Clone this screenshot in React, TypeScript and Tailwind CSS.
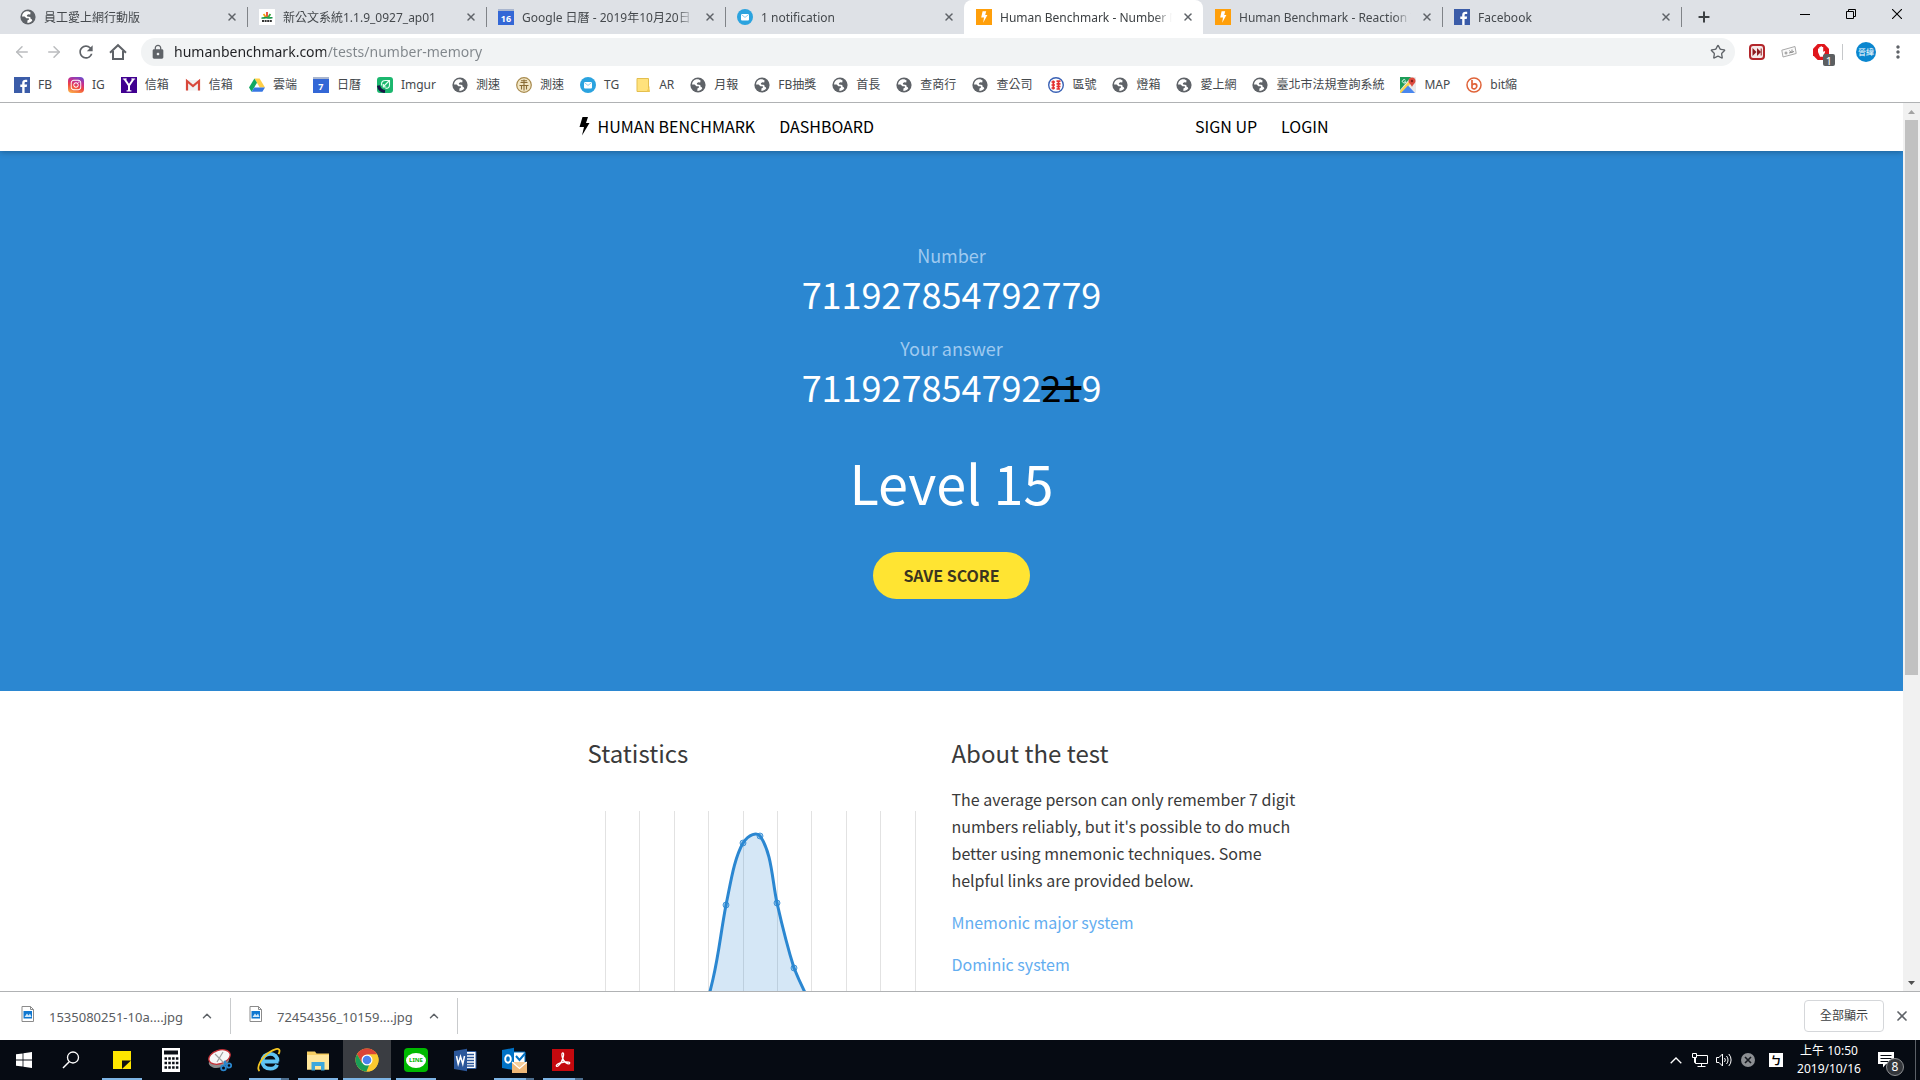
import React from "react";
import { ArrowLeft, ArrowRight, ChevronUp, Plus, Star, X } from "lucide-react";
import { FaInstagram } from "react-icons/fa";
import { MdLock, MdMoreVert, MdRefresh } from "react-icons/md";

const icon16 = "size-4 shrink-0";

function Globe() {
  return (
    <svg className={icon16} viewBox="0 0 16 16" aria-hidden="true">
      <circle cx="8" cy="8" r="7.6" fill="#5f6368" />
      <path d="M6.2 2.2 C3.6 3 2.1 5 2 7.4 L4.6 7.5 L6.4 9.3 L8.8 9.2 L9 10.6 L7.4 11.6 L7.4 14 C9.5 13.9 11.2 12.9 12.3 11.6 L11.7 10.2 L10.5 9.6 L10.3 8 L7.2 7.4 L6.8 6.2 L8.4 5.2 L10.2 5.4 L10.6 3.6 L8.4 2.3 Z" fill="#fff" />
    </svg>
  );
}

function FacebookMark() {
  return (
    <svg className={icon16} viewBox="0 0 16 16" aria-hidden="true">
      <rect width="16" height="16" fill="#3b5ca8" />
      <path d="M8.2 16V10H6.3V7.6h1.9V6c0-2.2 1.3-3.3 3.2-3.3.9 0 1.5.1 1.8.1v2.1h-1.3c-1 0-1.3.5-1.3 1.2v1.5h2.5L12.7 10h-2.1v6z" fill="#fff" />
    </svg>
  );
}

function Bolt() {
  return (
    <svg className={icon16} viewBox="0 0 16 16" aria-hidden="true">
      <rect width="16" height="16" fill="#ff9f0a" />
      <path d="M6.6 2.2h3.6L9.2 6h2.2L7.2 13.8 8 8.4H5.2z" fill="#fff" />
    </svg>
  );
}

function MailDot() {
  return (
    <svg className={icon16} viewBox="0 0 16 16" aria-hidden="true">
      <circle cx="8" cy="8" r="8" fill="#2ba3df" />
      <rect x="4" y="5" width="8" height="6.4" rx="1" fill="#fff" />
      <path d="M4.4 5.6 8 8.4l3.6-2.8" stroke="#8ccdf0" fill="none" />
    </svg>
  );
}

function CalendarMark({ day }: { day: string }) {
  return (
    <span className="flex size-4 shrink-0 items-center justify-center border-t-2 border-[#a9b6cf] bg-[#3367d6] text-[9px] leading-none font-bold text-white">
      {day}
    </span>
  );
}

function OfficeMark() {
  return (
    <svg className={icon16} viewBox="0 0 16 16" aria-hidden="true">
      <rect width="16" height="16" fill="#fff" />
      <path d="M8 8.500V3" stroke="#e8432e" strokeWidth="1.800" />
      <path d="M7 8.500 4.600 5" stroke="#f0a30a" strokeWidth="1.800" />
      <path d="M9 8.500 11.400 5" stroke="#38a838" strokeWidth="1.800" />
      <path d="M2.500 9c2 .4 3.500-.8 5.500-.2 2 .6 3.500-.2 5.500 0" stroke="#159447" strokeWidth="1.600" fill="none" />
      <path d="M3 12h10" stroke="#333" strokeWidth="2" strokeDasharray="2 .6" />
    </svg>
  );
}

function InstagramMark() {
  return (
    <span className="flex size-4 shrink-0 items-center justify-center rounded bg-[linear-gradient(20deg,#fdc04d,#f0483e_40%,#c72d8d_65%,#5b51d8)] text-white">
      <FaInstagram className="size-3" />
    </span>
  );
}

function YahooMark() {
  return (
    <svg className={icon16} viewBox="0 0 16 16" aria-hidden="true">
      <rect width="16" height="16" fill="#400090" />
      <path d="M3.500 2 8 8.500 12.500 2M8 8v6" stroke="#fff" strokeWidth="2" fill="none" />
      <path d="M1.800 2h4M10.200 2h4M5.600 13.800h4.800" stroke="#fff" strokeWidth="1.200" fill="none" />
    </svg>
  );
}

function GmailMark() {
  return (
    <svg className={icon16} viewBox="0 0 16 16" aria-hidden="true">
      <path d="M1 3h14v10.5H1z" fill="#f1f1f1" />
      <path d="M2 13.5V4l6 5 6-5v9.5" stroke="#d8473a" strokeWidth="2.2" fill="none" />
    </svg>
  );
}

function DriveMark() {
  return (
    <svg className={icon16} viewBox="0 0 16 16" aria-hidden="true">
      <path d="M5.4 1.5h5.2L16 10.4h-5.2z" fill="#ffcf48" />
      <path d="M5.4 1.5 8 5.8 2.6 14.8 0 10.4z" fill="#11a861" />
      <path d="M5.2 10.4H16l-2.6 4.4H2.6z" fill="#3777e3" />
    </svg>
  );
}

function ImgurMark() {
  return (
    <svg className={icon16} viewBox="0 0 16 16" aria-hidden="true">
      <rect width="16" height="16" rx="3" fill="#1bb76e" />
      <path d="M1.500 8.500c.5 3 2.500 5.500 6.500 6" stroke="#171544" strokeWidth="3.200" fill="none" />
      <path d="M4.600 8.500C4 4.500 6 3.500 8.500 3.500h4V8c0 2-1.500 3.500-4 3.500" stroke="#e8fff3" strokeWidth="1.100" fill="none" />
      <path d="M12 4 6.500 9.500M6.300 7v3h3" stroke="#e8fff3" strokeWidth="1.200" fill="none" />
    </svg>
  );
}

function SealMark() {
  return (
    <svg className={icon16} viewBox="0 0 16 16" aria-hidden="true">
      <circle cx="8" cy="8" r="7.300" fill="#f2e6c4" stroke="#a78a4d" strokeWidth="1.200" />
      <path d="M8 2.500v11M4.500 5.500h7M3.500 8.500h9M5.500 8.500v4M10.500 8.500v4M5 3.800h6" stroke="#8a6c34" strokeWidth="1.100" fill="none" />
    </svg>
  );
}

function FolderMark() {
  return (
    <svg className={icon16} viewBox="0 0 16 16" aria-hidden="true">
      <path d="M2 1.500h11.500v10.500l1 2.500H2z" fill="#ffe27c" stroke="#e3be4e" />
      <path d="M11.500 14.500 14.500 9v5.500z" fill="#f4cb53" />
    </svg>
  );
}

function PhoneMark() {
  return (
    <svg className={icon16} viewBox="0 0 16 16" aria-hidden="true">
      <circle cx="8" cy="8" r="7.300" fill="#fff" stroke="#3b62b5" strokeWidth="1.400" />
      <path d="M5.300 3.500v9M3.500 5h3.500M3.500 8h3.500M3.500 11h3.500M8.500 4.200h4M8.500 6.800h4M10.500 4v8.500M8.500 9.500h4M8.500 12h3.500" stroke="#e33030" strokeWidth="1.700" fill="none" />
    </svg>
  );
}

function MapMark() {
  return (
    <svg className={icon16} viewBox="0 0 16 16" aria-hidden="true">
      <rect width="16" height="16" rx="1" fill="#e9e9e9" />
      <path d="M0 0h11L0 13z" fill="#1d9d58" />
      <path d="M0 14 11 2l2 2L2 16H0z" fill="#fbd34a" />
      <path d="M1 16 8 8.500 15 16z" fill="#4a87ee" />
      <path d="M12 .5a3.500 3.500 0 0 1 3.500 3.500c0 2.500-2.500 3-3.500 6-1-3-3.500-3.500-3.500-6A3.500 3.500 0 0 1 12 .5z" fill="#dd4b3e" />
      <circle cx="12" cy="4" r="1.200" fill="#7c1d17" />
      <path d="M5.500 3.300a1.700 1.700 0 1 0 .3 1.500H4.300" stroke="#fff" strokeWidth=".9" fill="none" />
    </svg>
  );
}

function BitlyMark() {
  return (
    <svg className={icon16} viewBox="0 0 16 16" aria-hidden="true">
      <circle cx="8" cy="8" r="7" fill="#fff" stroke="#e0643a" strokeWidth="1.500" />
      <path d="M6 3v8.300M6 8.500c1.200-2.500 5-2 4.800.8-.2 2.700-3.600 3.500-4.800 1.600" stroke="#e0643a" strokeWidth="1.700" fill="none" />
    </svg>
  );
}

const tabs: { title: string; icon: React.ReactNode }[] = [
  { title: "員工愛上網行動版", icon: <Globe /> },
  { title: "新公文系統1.1.9_0927_ap01", icon: <OfficeMark /> },
  { title: "Google 日曆 - 2019年10月20日", icon: <CalendarMark day="16" /> },
  { title: "1 notification", icon: <MailDot /> },
  { title: "Human Benchmark - Number M", icon: <Bolt /> },
  { title: "Human Benchmark - Reaction T", icon: <Bolt /> },
  { title: "Facebook", icon: <FacebookMark /> },
];
const activeTab = 4;

const bookmarks: { label: string; icon: React.ReactNode }[] = [
  { label: "FB", icon: <FacebookMark /> },
  { label: "IG", icon: <InstagramMark /> },
  { label: "信箱", icon: <YahooMark /> },
  { label: "信箱", icon: <GmailMark /> },
  { label: "雲端", icon: <DriveMark /> },
  { label: "日曆", icon: <CalendarMark day="7" /> },
  { label: "Imgur", icon: <ImgurMark /> },
  { label: "測速", icon: <Globe /> },
  { label: "測速", icon: <SealMark /> },
  { label: "TG", icon: <MailDot /> },
  { label: "AR", icon: <FolderMark /> },
  { label: "月報", icon: <Globe /> },
  { label: "FB抽獎", icon: <Globe /> },
  { label: "首長", icon: <Globe /> },
  { label: "查商行", icon: <Globe /> },
  { label: "查公司", icon: <Globe /> },
  { label: "區號", icon: <PhoneMark /> },
  { label: "燈箱", icon: <Globe /> },
  { label: "愛上網", icon: <Globe /> },
  { label: "臺北市法規查詢系統", icon: <Globe /> },
  { label: "MAP", icon: <MapMark /> },
  { label: "bit縮", icon: <BitlyMark /> },
];

function TabStrip() {
  return (
    <div className="flex h-[34px] shrink-0 bg-[#dee1e6] pl-2">
      <div role="tablist" className="flex min-w-0">
        {tabs.map((tab, i) => {
          const active = i === activeTab;
          const divided = !active && i + 1 !== activeTab;
          return (
            <div
              key={i}
              role="tab"
              aria-selected={active}
              className={
                active
                  ? "flex w-[239px] items-center gap-2 rounded-t-lg bg-white pr-[7px] pl-3 text-[#3c4043]"
                  : "flex w-[239px] items-center gap-2 pl-3 text-[#45494d]"
              }
            >
              {tab.icon}
              <span className="min-w-0 flex-1 overflow-hidden mask-[linear-gradient(90deg,#000_90%,transparent)] pt-px leading-5 whitespace-nowrap">
                {tab.title}
              </span>
              <button type="button" aria-label="Close tab" className="flex size-4 items-center justify-center">
                <X className="size-3 text-[#5f6368]" strokeWidth={3} />
              </button>
              {!active && <span className={divided ? "-mx-px h-5 w-px bg-[#808388]" : "-mx-px h-5 w-px"} />}
            </div>
          );
        })}
      </div>
      <button type="button" aria-label="New tab" className="flex w-[46px] items-center justify-center">
        <Plus className="size-4 text-[#3c4043]" strokeWidth={3} />
      </button>
      <div className="ml-auto flex h-7">
        <button type="button" aria-label="Minimize" className="flex w-[46px] items-center justify-center">
          <svg className="size-[10px]" viewBox="0 0 10 10"><path d="M0 5.500h10" stroke="#000" /></svg>
        </button>
        <button type="button" aria-label="Restore" className="flex w-[46px] items-center justify-center">
          <svg className="size-[10px]" viewBox="0 0 10 10"><path d="M.5 2.500h7v7h-7zM2.500 2.500v-2h7v7h-2" stroke="#000" fill="none" /></svg>
        </button>
        <button type="button" aria-label="Close" className="flex w-[46px] items-center justify-center">
          <svg className="size-[10px]" viewBox="0 0 10 10"><path d="M0 0l10 10M10 0 0 10" stroke="#000" strokeWidth="1.100" /></svg>
        </button>
      </div>
    </div>
  );
}

function Toolbar() {
  return (
    <div className="flex h-9 shrink-0 items-center bg-white pr-[11px] pl-[6px]">
      <button type="button" aria-label="Back" className="flex w-8 justify-center"><ArrowLeft className="size-[18px] text-[#babcbe]" /></button>
      <button type="button" aria-label="Forward" className="flex w-8 justify-center"><ArrowRight className="size-[18px] text-[#babcbe]" /></button>
      <button type="button" aria-label="Reload" className="flex w-8 justify-center"><MdRefresh className="size-5 text-[#5f6368]" /></button>
      <button type="button" aria-label="Home" className="flex w-8 justify-center">
        <svg className="size-5" viewBox="0 0 20 20"><path d="M2 10.800 10 3.200l8 7.600M5 9v8h10V9" stroke="#5f6368" strokeWidth="2" fill="none" /></svg>
      </button>
      <div className="ml-[7px] flex h-7 flex-1 items-center rounded-full bg-[#f1f3f4] pr-[9px] pl-[9px]">
        <MdLock className="size-4 text-[#5f6368]" />
        <input
          aria-label="Address"
          readOnly
          defaultValue="humanbenchmark.com/tests/number-memory"
          className="ml-2 min-w-0 flex-1 bg-[linear-gradient(90deg,#202124_152px,#80868b_152px)] bg-clip-text text-sm text-transparent outline-none"
        />
        <button type="button" aria-label="Bookmark this page"><Star className="size-4 text-[#5f6368]" /></button>
      </div>
      <div className="ml-[6px] flex items-center">
        <button type="button" aria-label="Skip extension" className="flex w-8 justify-center">
          <svg className="size-4" viewBox="0 0 16 16">
            <rect x="1" y="1" width="14" height="14" rx="3" fill="#f6e9e9" stroke="#b3262b" strokeWidth="2" />
            <path d="M3.500 4 7.500 8l-4 4zM8 4l4 4-4 4z" fill="#8e1b1f" />
            <path d="M12.200 4.500v7" stroke="#8e1b1f" />
          </svg>
        </button>
        <button type="button" aria-label="Ticket extension" className="flex w-8 justify-center">
          <svg className="size-4" viewBox="0 0 16 16">
            <path d="M.8 6.200 14 2.500l1.200 7L2 13z" fill="#fafafa" stroke="#a9a9a9" />
            <path d="M3.500 9h3M5 7.500v3M8.500 6.500l2 2.500M11 5.500v3.500M8 9l5-1.500" stroke="#8f8f8f" fill="none" />
          </svg>
        </button>
        <button type="button" aria-label="Blocker extension" className="relative flex w-8 justify-center">
          <svg className="size-4" viewBox="0 0 16 16">
            <path d="M4.700 0h6.600L16 4.700v6.600L11.300 16H4.700L0 11.300V4.700z" fill="#e0161c" />
            <path d="M5 8V4.500h1.300V3h1.300v-.8h1.300V3h1.300v5l1-1 1 .8-2.400 5H7z" fill="#fff" />
          </svg>
          <span className="absolute top-[10px] left-[18px] flex h-3 w-3 items-center justify-center rounded-xs bg-[#5c5f61] text-[11px] leading-none text-white">1</span>
        </button>
        <span className="ml-[5px] h-4 w-px bg-[#c6c8ca]" />
        <button type="button" aria-label="Profile" className="ml-[13px] flex size-5 items-center justify-center rounded-full bg-[#0a86cf] text-[8px] leading-none text-white">晉緯</button>
        <button type="button" aria-label="Menu" className="ml-[11px] flex w-[22px] justify-center"><MdMoreVert className="size-5 text-[#5f6368]" /></button>
      </div>
    </div>
  );
}

function Bookmarks() {
  return (
    <nav aria-label="Bookmarks" className="flex h-[33px] shrink-0 items-center gap-4 overflow-hidden border-b border-[#b0b2b4] bg-white pb-[2px] pl-[14px] text-[#45494d]">
      {bookmarks.map((b, i) => (
        <a key={i} href="#" className="flex items-center gap-2 whitespace-nowrap">
          {b.icon}
          <span className="leading-5">{b.label}</span>
        </a>
      ))}
    </nav>
  );
}

const gridLines = [17.5, 51.5, 86.5, 120.5, 155.5, 189.5, 223.5, 258.5, 292.5, 327.5];
const dots = [[138, 94], [155, 32], [172, 25], [189, 92], [206, 157]];
const curve = "M106 240C116 205 121 185 125 168 131 142 133 120 138 94 143 70 146 48 155 32 161 23 169 21 172 25 184 42 184 69 189 92 194 114 200 138 206 157 212 172 222 192 232 210";

function Chart() {
  return (
    <svg className="mt-10 h-60 w-[364px] max-w-full" viewBox="0 0 364 240" role="img" aria-label="Score distribution">
      {gridLines.map((x) => <path key={x} d={`M${x} 0V240`} stroke="#e2e2e2" />)}
      <path d={curve + "L232 240Z"} fill="#2b87d1" fillOpacity=".2" />
      <path d={curve} stroke="#2b87d1" strokeWidth="3" fill="none" />
      {dots.map(([x, y]) => <circle key={x} cx={x} cy={y} r="3" fill="#2b87d1" fillOpacity=".4" stroke="#2b87d1" strokeOpacity=".8" />)}
    </svg>
  );
}

function Site() {
  return (
    <div className="min-w-0 flex-1 overflow-hidden bg-white font-['Noto_Sans_CJK_TC',sans-serif]">
      <header className="relative z-10 h-12 bg-white shadow-[0_1px_6px_rgba(0,0,0,0.3)]">
        <nav aria-label="Main" className="mx-auto flex h-full max-w-[754px] items-center gap-6 pb-[2px] text-base text-black">
          <a href="#" className="flex items-center gap-2">
            <svg className="ml-[3px] h-5 w-3" viewBox="0 0 12 20"><path d="M4.500 1H10L8 7h3.500L4 19.500 6 11H1.500z" fill="#000" /></svg>
            HUMAN BENCHMARK
          </a>
          <a href="#">DASHBOARD</a>
          <a href="#" className="ml-auto">SIGN UP</a>
          <a href="#">LOGIN</a>
        </nav>
      </header>
      <main>
        <section className="flex h-[540px] flex-col items-center bg-[#2b87d1] pt-[90px] text-white">
          <p className="text-lg leading-7 text-[#9fcaf0]">Number</p>
          <p className="text-4xl leading-[48px]">711927854792779</p>
          <p className="mt-[17px] text-lg leading-7 text-[#9fcaf0]">Your answer</p>
          <p className="text-4xl leading-[48px]">711927854792<s className="text-black decoration-4">21</s>9</p>
          <h1 className="mt-10 text-[54px] leading-[64px]">Level 15</h1>
          <button type="button" className="mt-[38px] h-[47px] rounded-full bg-[#ffe432] px-[30px] pb-[2px] text-base font-bold text-[#3b3520]">SAVE SCORE</button>
        </section>
        <section className="mx-auto grid max-w-[728px] grid-cols-2 pt-11 text-[#3a3a3a]">
          <div>
            <h2 className="text-2xl leading-9">Statistics</h2>
            <Chart />
          </div>
          <div className="text-base leading-[27px]">
            <h2 className="text-2xl leading-9">About the test</h2>
            <p className="mt-[15px]">
              The average person can only remember 7 digit numbers reliably, but it's possible to do much better using mnemonic techniques. Some helpful links are provided below.
            </p>
            <p className="mt-[15px]"><a href="#" className="text-[#63adf0]">Mnemonic major system</a></p>
            <p className="mt-[15px]"><a href="#" className="text-[#63adf0]">Dominic system</a></p>
          </div>
        </section>
      </main>
    </div>
  );
}

function Scrollbar() {
  return (
    <div className="flex w-[17px] shrink-0 flex-col bg-[#f1f1f1]">
      <button type="button" aria-label="Scroll up" className="flex h-[17px] items-center justify-center">
        <svg className="h-1 w-[7px]" viewBox="0 0 7 4"><path d="M0 4 3.500 0 7 4z" fill="#a3a3a3" /></svg>
      </button>
      <div className="flex-1 px-[2px]"><div className="h-[65%] bg-[#c1c1c1]" /></div>
      <button type="button" aria-label="Scroll down" className="flex h-[17px] items-center justify-center">
        <svg className="h-1 w-[7px]" viewBox="0 0 7 4"><path d="M0 0 3.500 4 7 0z" fill="#505050" /></svg>
      </button>
    </div>
  );
}

function Downloads() {
  return (
    <div className="flex h-[49px] shrink-0 items-center border-t border-[#b0b2b4] bg-white text-[#5a5d61]">
      {["1535080251-10a....jpg", "72454356_10159....jpg"].map((name, i) => (
        <div key={name} className={i === 0 ? "flex h-9 w-[231px] items-center border-r border-[#c9cbcd] pl-5" : "flex h-9 w-[227px] items-center border-r border-[#c9cbcd] pl-[17px]"}>
          <svg className="mb-1 size-4" viewBox="0 0 16 16" aria-hidden="true">
            <path d="M2 .5h8.500l3 3v12H2z" fill="#fff" stroke="#8b8b8b" />
            <path d="M10.500.5v3h3" fill="none" stroke="#8b8b8b" />
            <rect x="3.500" y="5" width="8.500" height="7.500" fill="#0f77d0" />
            <path d="M4.500 11 7 7.500l1.500 2 1.500-2 1.500 3.500z" fill="#cfe8fb" />
          </svg>
          <span className="ml-[13px] pt-1 text-[13px]">{name}</span>
          <button type="button" aria-label="Download options" className="mr-4 ml-auto"><ChevronUp className="size-[14px] text-[#5f6368]" strokeWidth={2.5} /></button>
        </div>
      ))}
      <button type="button" className="ml-auto h-8 w-20 rounded border border-[#d5d7da] text-[#3c4043]">全部顯示</button>
      <button type="button" aria-label="Close downloads" className="mr-[10px] ml-[10px]"><X className="size-4 text-[#5f6368]" strokeWidth={2.5} /></button>
    </div>
  );
}

const taskIcon = "size-6";
const apps: { name: string; state: "" | "open" | "multi" | "active"; icon: React.ReactNode }[] = [
  {
    name: "Start", state: "",
    icon: <svg className="size-4" viewBox="0 0 16 16"><path d="M0 2.300 6.600 1.400v6.200H0zM7.400 1.300 16 0v7.600H7.400zM0 8.400h6.600v6.200L0 13.700zM7.400 8.400H16V16l-8.600-1.300z" fill="#fff" /></svg>,
  },
  {
    name: "Search", state: "",
    icon: <svg className="mr-1 size-[18px]" viewBox="0 0 18 18"><circle cx="11" cy="6.500" r="5.500" stroke="#fff" strokeWidth="1.300" fill="none" /><path d="M7.200 10.800 1 17" stroke="#fff" strokeWidth="1.500" /></svg>,
  },
  {
    name: "Sticky Notes", state: "open",
    icon: <svg className="size-[18px]" viewBox="0 0 18 18"><path d="M0 0h18v18H0z" fill="#ffe600" /><path d="M9 18V9.500h9z" fill="#111" /></svg>,
  },
  {
    name: "Calculator", state: "",
    icon: (
      <svg className={taskIcon} viewBox="0 0 24 24">
        <path d="M3 0h18v24H3z" fill="#fff" />
        <path d="M5 2.500h14v4H5z" fill="#0b0f16" />
        <path d="M5.500 10.500h14M5.500 15h14M5.500 19.500h14" stroke="#0b0f16" strokeWidth="2.500" strokeDasharray="2.500 1.300" />
      </svg>
    ),
  },
  {
    name: "Snipping Tool", state: "",
    icon: (
      <svg className={taskIcon} viewBox="0 0 24 24">
        <ellipse cx="11" cy="13" rx="10.500" ry="6.500" transform="rotate(-18 11 13)" fill="#8d8d8d" />
        <ellipse cx="11.500" cy="9" rx="11" ry="6.800" transform="rotate(-18 11.500 9)" fill="#f7f7f7" stroke="#c62f35" strokeWidth="1.300" />
        <path d="M7 6l9 9M15 4 9 14" stroke="#a0a0a0" strokeWidth="1.200" />
        <g fill="none" stroke="#2a86cc" strokeWidth="1.800"><circle cx="15.500" cy="20" r="2.400" /><circle cx="21" cy="17.500" r="2.200" /><path d="M16.500 17.500l1-5M19 16.500l-3-3" /></g>
      </svg>
    ),
  },
  {
    name: "Internet Explorer", state: "multi",
    icon: (
      <svg className={taskIcon} viewBox="0 0 24 24">
        <path d="M5.500 13.500h16M20.500 13.400c.2-4.800-3-7.600-7.300-7.600-4.600 0-7.700 3.200-7.700 7.600 0 4.500 3.200 7.300 7.800 7.300 3.200 0 5.600-1.300 6.800-4" stroke="#5fc4f3" strokeWidth="3.800" fill="none" />
        <path d="M2.500 23C-1 20 4 10 12 4.500c5-3.500 10-5 10.500-2 .2 1.200-.4 2.500-1 3.700" stroke="#f3c623" strokeWidth="1.800" fill="none" />
      </svg>
    ),
  },
  {
    name: "File Explorer", state: "open",
    icon: (
      <svg className={taskIcon} viewBox="0 0 24 24">
        <path d="M1 3.500h8l1.500 2H23v16H1z" fill="#f6ce62" />
        <path d="M1 7h22v14.500H1z" fill="#ffe69b" />
        <path d="M5.500 22.500v-8.500h13v8.500h-3.500v-4.500H9v4.500z" fill="#3ca7dc" />
      </svg>
    ),
  },
  {
    name: "Chrome", state: "active",
    icon: (
      <svg className={taskIcon} viewBox="0 0 24 24">
        <circle cx="12" cy="12" r="11.500" fill="#fbc92f" />
        <path d="M12 12 7 15 2 6.300a11.500 11.500 0 0 1 20 0z" fill="#db4437" />
        <path d="M12 12l5 3-5.600 8.500A11.500 11.500 0 0 1 2 6.300L7 15z" fill="#1a9e57" />
        <path d="M17.200 9.300 11.500 23.500A11.500 11.500 0 0 0 22 6.300H12z" fill="#fbc92f" />
        <circle cx="12" cy="12" r="5.500" fill="#fff" /><circle cx="12" cy="12" r="4.300" fill="#4a82ee" />
      </svg>
    ),
  },
  {
    name: "LINE", state: "open",
    icon: (
      <span className="flex size-6 items-center justify-center rounded bg-[#00b900]">
        <span className="flex h-[15px] w-5 items-center justify-center rounded-[50%] bg-white text-[6px] leading-none font-bold text-[#00b900]">LINE</span>
      </span>
    ),
  },
  {
    name: "Word", state: "",
    icon: (
      <svg className={taskIcon} viewBox="0 0 24 24">
        <path d="M12 3.500h11v17H12z" fill="#fff" stroke="#2b579a" />
        <path d="M14 6.500h7M14 9.500h7M14 12.500h7M14 15.500h7M14 18h7" stroke="#2b579a" strokeWidth="1.300" />
        <path d="M1 3 14 .8v22.400L1 21z" fill="#2b579a" />
        <path d="M3.500 8l1.700 8 2.300-7.500L9.800 16l1.700-8" stroke="#fff" strokeWidth="1.500" fill="none" />
      </svg>
    ),
  },
  {
    name: "Outlook", state: "multi",
    icon: (
      <svg className="size-[26px]" viewBox="0 0 26 26">
        <path d="M12 5h12v13H12z" fill="#fff" stroke="#0072c6" />
        <path d="M15 9l3.500 4L24 6.500" stroke="#0072c6" strokeWidth="2" fill="none" />
        <path d="M1 3 13 .8v22.400L1 21z" fill="#0072c6" />
        <ellipse cx="7" cy="12" rx="2.800" ry="3.700" stroke="#fff" strokeWidth="1.900" fill="none" />
        <path d="M11 15h15v11H11z" fill="#efb878" />
        <path d="M11 15l7.500 6.500L26 15" stroke="#fff" strokeWidth="1.200" fill="#f7cf9c" />
      </svg>
    ),
  },
  {
    name: "Acrobat Reader", state: "multi",
    icon: (
      <svg className={taskIcon} viewBox="0 0 24 24">
        <path d="M1 1h22v22H1z" fill="#c4090e" />
        <path d="M11.500 5c2-.5 1 4.500-1 8.500-1.500 3.200-4 5.600-5 4.700-1.200-1.200 3-3.500 7.500-4.200 4-.6 6.500.3 5.500 1.500-1.500 1.500-6-2-7-5.500-.7-2.500-.8-4.700 0-5z" stroke="#fff" strokeWidth="1.300" fill="none" />
      </svg>
    ),
  },
];

function Taskbar() {
  return (
    <footer className="flex h-10 shrink-0 items-stretch bg-[#060b13] text-white">
      <div className="flex gap-px">
        {apps.map((app) => (
          <button
            key={app.name}
            type="button"
            aria-label={app.name}
            className={app.state === "active" ? "relative flex w-12 items-center justify-center bg-[#3a3d42]" : "relative flex w-12 items-center justify-center"}
          >
            {app.icon}
            {app.state === "active" && <span className="absolute inset-x-0 bottom-0 h-[2px] bg-[#7db4e4]" />}
            {app.state === "open" && <span className="absolute inset-x-1 bottom-0 h-[2px] bg-[#7db4e4]" />}
            {app.state === "multi" && <span className="absolute inset-x-1 bottom-0 h-[2px] border-r-8 border-[#4d6f8f] bg-[#7db4e4]" />}
          </button>
        ))}
      </div>
      <div className="ml-auto flex items-center">
        <button type="button" aria-label="Hidden icons" className="flex w-6 justify-center">
          <svg className="h-[7px] w-3" viewBox="0 0 12 7"><path d="M.7 6.300 6 1l5.300 5.300" stroke="#fff" strokeWidth="1.300" fill="none" /></svg>
        </button>
        <button type="button" aria-label="Network" className="flex w-6 justify-center">
          <svg className="size-4" viewBox="0 0 16 16"><path d="M3.500 3.500h12v8H3.500zM9.500 11.500v3M5.500 14.500h8M.5 1.500h4v4h-4zM2.500 5.500v5h1" stroke="#fff" fill="none" /><path d="M1 2h3v3H1z" fill="#060b13" /></svg>
        </button>
        <button type="button" aria-label="Volume" className="flex w-6 justify-center">
          <svg className="size-4" viewBox="0 0 16 16"><path d="M.5 5.500h2.500l3.500-3.500v12L3 10.500H.5zM8.500 6a3 3 0 0 1 0 4M10.500 4a6 6 0 0 1 0 8M12.800 2a9 9 0 0 1 0 12" stroke="#fff" fill="none" /></svg>
        </button>
        <button type="button" aria-label="Sync status" className="flex w-6 justify-center">
          <svg className="size-[14px]" viewBox="0 0 14 14"><circle cx="7" cy="7" r="7" fill="#8c8f93" /><path d="M4 4l6 6M10 4l-6 6" stroke="#15191f" strokeWidth="1.600" /></svg>
        </button>
        <button type="button" aria-label="Input method" className="ml-[9px] flex size-[14px] items-center justify-center bg-white text-[11px] leading-none font-bold text-black">ㄅ</button>
        <button type="button" className="ml-[6px] w-[80px] text-center text-xs leading-[18px]">
          上午 10:50
          <br />
          2019/10/16
        </button>
        <button type="button" aria-label="Notifications" className="relative ml-[9px] flex w-[37px] justify-start">
          <svg className="size-4" viewBox="0 0 16 16"><path d="M0 0h16v12H8l-3 3.500V12H0z" fill="#fff" /><path d="M2.500 3.500h11M2.500 6.500h11M2.500 9.500h8" stroke="#060b13" /></svg>
          <span className="absolute top-[6px] left-2 flex size-[18px] items-center justify-center rounded-full border border-[#8d8f92] bg-[#33363b] text-xs leading-none">8</span>
        </button>
        <span className="mr-1 h-10 w-px bg-[#5b6067]" />
      </div>
    </footer>
  );
}

export default function App() {
  return (
    <div className="flex h-screen flex-col overflow-hidden bg-white font-['Noto_Sans','Noto_Sans_CJK_TC',sans-serif] text-xs">
      <TabStrip />
      <Toolbar />
      <Bookmarks />
      <div className="flex min-h-0 flex-1">
        <Site />
        <Scrollbar />
      </div>
      <Downloads />
      <Taskbar />
    </div>
  );
}
